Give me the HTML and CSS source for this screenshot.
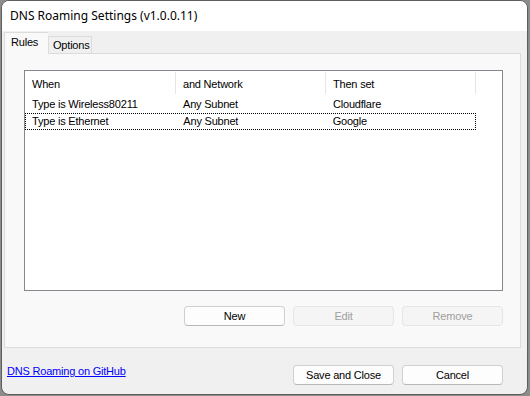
FILE: index.html
```html
<!DOCTYPE html>
<html lang="en">
<head>
<meta charset="UTF-8">
<title>DNS Roaming Settings</title>
<link rel="stylesheet" href="styles.css">
</head>
<body>
<div class="window">
  <div class="titlebar">DNS Roaming Settings (v1.0.0.11)</div>
  <div class="client">
    <div class="tabs">
      <div class="tab active">Rules</div>
      <div class="tab">Options</div>
    </div>
    <div class="panel">
      <div class="listview">
        <div class="lv-head">
          <div class="col">When</div>
          <div class="col">and Network</div>
          <div class="col">Then set</div>
        </div>
        <div class="lv-row">
          <div class="cell">Type is Wireless80211</div>
          <div class="cell">Any Subnet</div>
          <div class="cell">Cloudflare</div>
        </div>
        <div class="lv-row focused">
          <div class="cell">Type is Ethernet</div>
          <div class="cell">Any Subnet</div>
          <div class="cell">Google</div>
        </div>
      </div>
      <div class="button-row">
        <button class="btn">New</button>
        <button class="btn" disabled>Edit</button>
        <button class="btn" disabled>Remove</button>
      </div>
    </div>
    <div class="footer">
      <a class="link" href="#">DNS Roaming on GitHub</a>
      <div class="footer-buttons">
        <button class="btn">Save and Close</button>
        <button class="btn">Cancel</button>
      </div>
    </div>
  </div>
</div>
</body>
</html>
```

FILE: styles.css
```css
body {
  margin: 0;
  background: #8c8c8c;
  font-family: 'Liberation Sans', Arial, sans-serif;
  font-size: 11px;
  letter-spacing: -0.2px;
  color: #000;
}
.window {
  width: 527px;
  height: 395px;
  margin-left: 1px;
  box-sizing: border-box;
  border: 1px solid #5e5e5e;
  border-radius: 8px;
  overflow: hidden;
  background: #f0f0f0;
  display: flex;
  flex-direction: column;
}
.titlebar {
  height: 30px;
  background: #fff;
  font-family: 'Noto Sans', sans-serif;
  font-size: 12px;
  letter-spacing: 0;
  line-height: 30px;
  padding-left: 8px;
}
.client {
  flex: 1;
  display: flex;
  flex-direction: column;
}
.tabs {
  height: 22px;
  display: flex;
  align-items: flex-end;
  padding-left: 2px;
}
.tab {
  height: 17px;
  line-height: 17px;
  padding: 0 4px;
  border: 1px solid #dcdcdc;
  border-bottom: none;
  background: #f0f0f0;
  box-sizing: border-box;
  width: 44px;
}
.tab.active {
  height: 22px;
  line-height: 19px;
  width: 44px;
  background: #f9f9f9;
  margin-bottom: -1px;
  position: relative;
  z-index: 1;
  border-right: none;
  padding-left: 6px;
}
.panel {
  margin-left: 2px;
  width: 517px;
  height: 295px;
  box-sizing: border-box;
  background: #f9f9f9;
  border: 1px solid #dcdcdc;
  padding: 16px 17px 0 19px;
}
.listview {
  width: 479px;
  height: 221px;
  box-sizing: border-box;
  border: 1px solid #828790;
  background: #fff;
}
.lv-head, .lv-row {
  display: flex;
  width: 451px;
}
.lv-head {
  height: 25px;
}
.col {
  width: 150px;
  padding-left: 7px;
  box-sizing: border-box;
  line-height: 25px;
  border-right: 1px solid #e5e5e5;
  margin: 1px 0 0;
  height: 22px;
}
.col:first-child {
  width: 151px;
}
.lv-row {
  height: 17px;
  line-height: 17px;
  box-sizing: border-box;
}
.lv-row .cell {
  width: 150px;
  padding-left: 7px;
  box-sizing: border-box;
}
.lv-row .cell:first-child {
  width: 151px;
}
.lv-row.focused {
  border: 1px dotted #000;
  line-height: 15px;
}
.lv-row.focused .cell:first-child {
  padding-left: 6px;
}
.button-row {
  display: flex;
  justify-content: flex-end;
  gap: 8px;
  margin-top: 15px;
}
.btn {
  width: 101px;
  height: 20px;
  padding: 0;
  font-family: 'Liberation Sans', Arial, sans-serif;
  font-size: 11px;
  letter-spacing: -0.2px;
  color: #000;
  background: #fdfdfd;
  border: 1px solid #d0d0d0;
  border-bottom-color: #b8b8b8;
  border-radius: 4px;
}
.btn:disabled {
  color: #9d9d9d;
  background: #f5f5f5;
  border-color: #e5e5e5;
}
.footer {
  flex: 1;
  display: flex;
  align-items: flex-start;
  padding: 17px 24px 0 5px;
}
.link {
  color: #0000ff;
  line-height: 12px;
}
.footer-buttons {
  margin-left: auto;
  display: flex;
  gap: 8px;
}
```
